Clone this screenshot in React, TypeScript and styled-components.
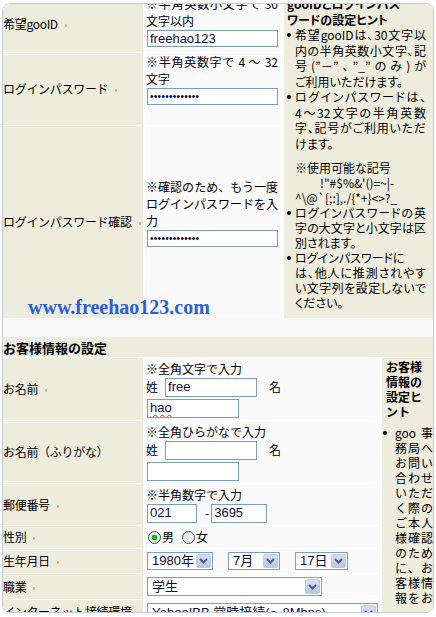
import React from "react";
import styled, { createGlobalStyle } from "styled-components";

const JP = `"Noto Sans CJK JP", "Noto Sans", sans-serif`;
const UI = `"Liberation Sans", "Noto Sans CJK JP", sans-serif`;
const BEIGE = "#edecdd";
const FIELD = "#fafafa";

const Global = createGlobalStyle`
  html, body { margin: 0; padding: 0; background: #ffffff; }
  body { font-family: ${JP}; font-size: 12px; color: #000; }
  ul { margin: 0; padding: 0; list-style: none; }
`;

const Frame = styled.div`
  position: relative;
  box-sizing: border-box;
  width: 432px;
  height: 610px;
  margin: 3px 0 0 2px;
  border: 1px solid #c4cadf;
  border-radius: 8px;
  overflow: hidden;
  background: #f8f8f8;
`;

const Watermark = styled.div`
  position: absolute;
  left: 25px;
  top: 291px;
  font-family: "Liberation Serif", "Times New Roman", serif;
  font-weight: bold;
  font-size: 20px;
  line-height: 24px;
  color: #2c5fd6;
  pointer-events: none;
`;

const TopTable = styled.div`
  display: grid;
  grid-template-columns: 140px 137px 1fr;
  grid-template-rows: 62px 72px 192px;
  column-gap: 2px;
  row-gap: 1px;
  margin-top: -14px;
  background: #fff;
`;

const BottomTable = styled.div`
  display: grid;
  grid-template-columns: 140px 235px 1fr;
  grid-template-rows: 20px 62px 62px 41px 22px 24px 25px 23px;
  column-gap: 2px;
  row-gap: 1px;
  margin-top: 19px;
  background: #fff;
`;

const SectionHead = styled.div`
  grid-column: 1 / -1;
  background: ${BEIGE};
  font-weight: bold;
  font-size: 13px;
  display: flex;
  align-items: center;
`;

const Label = styled.div<{ $pt?: number }>`
  background: ${BEIGE};
  display: flex;
  align-items: center;
  padding-top: ${(p) => p.$pt ?? 0}px;
  line-height: 16px;
  letter-spacing: -0.3px;
  white-space: nowrap;
  overflow: hidden;
`;

const Req = styled.span`
  display: inline-block;
  flex: none;
  width: 2px;
  height: 3px;
  margin: 3px 0 0 7px;
  background: #f3a5a5;
`;

const Field = styled.div<{ $pt?: number; $center?: boolean; $lh?: number }>`
  background: ${FIELD};
  box-sizing: border-box;
  padding: ${(p) => p.$pt ?? 0}px 4px 0 1px;
  display: flex;
  flex-direction: column;
  justify-content: ${(p) => (p.$center ? "center" : "flex-start")};
  line-height: ${(p) => p.$lh ?? 17}px;
  overflow: hidden;
`;

const Line = styled.div<{ $j?: boolean; $indent?: number }>`
  text-align: ${(p) => (p.$j ? "justify" : "left")};
  text-align-last: ${(p) => (p.$j ? "justify" : "auto")};
  padding-left: ${(p) => p.$indent ?? 0}px;
  white-space: ${(p) => (p.$j ? "normal" : "nowrap")};
`;

const InputRow = styled.div<{ $mt?: number; $h?: number }>`
  display: flex;
  align-items: center;
  height: ${(p) => p.$h ?? 19}px;
  margin-top: ${(p) => p.$mt ?? 0}px;
  white-space: nowrap;
`;

const Word = styled.span<{ $ml?: number }>`
  margin-left: ${(p) => p.$ml ?? 0}px;
`;

const TextBox = styled.div<{ $w: number; $h?: number; $ml?: number; $mt?: number }>`
  box-sizing: border-box;
  flex: none;
  width: ${(p) => p.$w}px;
  height: ${(p) => p.$h ?? 19}px;
  margin-left: ${(p) => p.$ml ?? 0}px;
  margin-top: ${(p) => p.$mt ?? 0}px;
  border: 1px solid #7f9db9;
  background: #fff;
  padding: 0 2px;
  display: flex;
  align-items: center;
  font-family: ${UI};
  font-size: 13px;
  color: #0c0c40;
  overflow: hidden;
`;

const Typed = styled.span`
  text-decoration: underline wavy #e02424;
  text-decoration-thickness: 1px;
  text-underline-offset: 2px;
`;

const Dots = styled.span`
  font-family: ${UI};
  font-size: 10px;
  letter-spacing: 0.3px;
  color: #000030;
`;

const Select = styled.div<{ $w: number; $h?: number; $ml?: number }>`
  box-sizing: border-box;
  flex: none;
  width: ${(p) => p.$w}px;
  height: ${(p) => p.$h ?? 18}px;
  margin-left: ${(p) => p.$ml ?? 0}px;
  border: 1px solid #7f9db9;
  background: #fff;
  padding: 0 1px 0 4px;
  display: flex;
  align-items: center;
  justify-content: space-between;
  font-family: ${UI};
  font-size: 13px;
  color: #0c0c30;
  overflow: hidden;
`;

const DropBtn = styled.span`
  box-sizing: border-box;
  flex: none;
  width: 15px;
  height: calc(100% - 2px);
  border-radius: 2px;
  border: 1px solid #bccae6;
  background: linear-gradient(#d6dff2, #b8c6e2);
  display: flex;
  align-items: center;
  justify-content: center;
`;

const Radio = styled.span<{ $on?: boolean; $ml?: number }>`
  box-sizing: border-box;
  flex: none;
  width: 13px;
  height: 13px;
  margin-left: ${(p) => p.$ml ?? 0}px;
  border-radius: 50%;
  border: 1px solid #1c5180;
  background: ${(p) =>
    p.$on
      ? "radial-gradient(circle, #3cc13c 0, #1f9a1f 2.6px, #f4f4ee 3.2px, #e2e2da 100%)"
      : "linear-gradient(135deg, #d8d8d0 0%, #f4f4ef 60%, #ffffff 100%)"};
`;

const TopHint = styled.div`
  grid-column: 3;
  grid-row: 1 / span 3;
  background: ${BEIGE};
  padding: 6px 7px 0 3px;
  line-height: 15.5px;
  font-feature-settings: "palt";
`;

const SideHint = styled.div`
  grid-column: 3;
  grid-row: 2 / span 7;
  background: ${BEIGE};
  padding: 1px 0 0 1px;
  line-height: 15px;
`;

const HintTitle = styled.div<{ $ml?: number }>`
  font-weight: bold;
  white-space: nowrap;
  margin-left: ${(p) => p.$ml ?? 0}px;
`;

const Bullets = styled.ul<{ $indent: number; $mt?: number }>`
  padding-left: ${(p) => p.$indent}px !important;
  margin-top: ${(p) => p.$mt ?? 0}px !important;
`;

const Item = styled.li<{ $dot: number; $lh?: number }>`
  position: relative;
  line-height: ${(p) => (p.$lh ? `${p.$lh}px` : "inherit")};
  &::before {
    content: "";
    position: absolute;
    left: -${(p) => p.$dot}px;
    top: 5.5px;
    width: 4px;
    height: 4px;
    border-radius: 50%;
    background: #000;
  }
`;

const Block = styled.div<{ $mt?: number; $lh?: number }>`
  margin-top: ${(p) => p.$mt ?? 0}px;
  line-height: ${(p) => (p.$lh ? `${p.$lh}px` : "inherit")};
`;

const Chevron = () => (
  <svg width="9" height="6" viewBox="0 0 9 6">
    <path d="M1 1 L4.5 4.5 L8 1" fill="none" stroke="#4a5d88" strokeWidth="2" />
  </svg>
);

const Drop = ({ w, h, ml, children }: { w: number; h?: number; ml?: number; children: React.ReactNode }) => (
  <Select $w={w} $h={h} $ml={ml}>
    <span>{children}</span>
    <DropBtn>
      <Chevron />
    </DropBtn>
  </Select>
);

const Lines = ({ items }: { items: [string, boolean?, number?][] }) => (
  <>
    {items.map(([t, j, ind], i) => (
      <Line key={i} $j={!!j} $indent={ind}>
        {t}
      </Line>
    ))}
  </>
);

export default function App() {
  return (
    <>
      <Global />
      <Frame>
        <TopTable>
          <Label $pt={6}>
            希望gooID<Req />
          </Label>
          <Field $pt={5}>
            <Line $j>※半角英数小文字で 30</Line>
            <Line>文字以内</Line>
            <TextBox $w={131} $h={17} $ml={1} $mt={1}>
              <Typed>freehao123</Typed>
            </TextBox>
          </Field>
          <TopHint>
            <HintTitle>
              gooIDとログインパス
              <br />
              ワードの設定ヒント
            </HintTitle>
            <Bullets $indent={8}>
              <Item $dot={8}>
                <Lines
                  items={[
                    ["希望gooIDは、30文字以", true],
                    ["内の半角英数小文字、記", true],
                    ["号(”－”、”_”のみ)が", true],
                    ["ご利用いただけます。"],
                  ]}
                />
              </Item>
              <Item $dot={8}>
                <Lines
                  items={[
                    ["ログインパスワードは、", true],
                    ["4～32文字の半角英数", true],
                    ["字、記号がご利用いただ", true],
                    ["けます。"],
                  ]}
                />
                <Block $mt={9} $lh={15}>
                  <Lines
                    items={[
                      ["※使用可能な記号"],
                      [`!"#$%&'()=~|-`, false, 25],
                      ["^\\@`[;:],./{*+}<>?_"],
                    ]}
                  />
                </Block>
              </Item>
              <Item $dot={8} $lh={15}>
                <Lines
                  items={[
                    ["ログインパスワードの英", true],
                    ["字の大文字と小文字は区", true],
                    ["別されます。"],
                  ]}
                />
              </Item>
              <Item $dot={8} $lh={15}>
                <Lines
                  items={[
                    ["ログインパスワードに"],
                    ["は、他人に推測されやす", true],
                    ["い文字列を設定しないで", true],
                    ["ください。"],
                  ]}
                />
              </Item>
            </Bullets>
          </TopHint>

          <Label>
            ログインパスワード<Req />
          </Label>
          <Field>
            <Line $j>※半角英数字で 4 ～ 32</Line>
            <Line>文字</Line>
            <TextBox $w={131} $h={17} $ml={1} $mt={1}>
              <Dots>•••••••••••••</Dots>
            </TextBox>
          </Field>

          <Label>
            ログインパスワード確認<Req />
          </Label>
          <Field $pt={52}>
            <Line $j>※確認のため、もう一度</Line>
            <Line $j>ログインパスワードを入</Line>
            <Line>力</Line>
            <TextBox $w={131} $h={17} $ml={1} $mt={1}>
              <Dots>•••••••••••••</Dots>
            </TextBox>
          </Field>
        </TopTable>

        <BottomTable>
          <SectionHead>お客様情報の設定</SectionHead>

          <Label>
            お名前<Req />
          </Label>
          <Field $center $lh={16}>
            <Line>※全角文字で入力</Line>
            <InputRow $mt={1}>
              <Word>姓</Word>
              <TextBox $w={92} $ml={7}>free</TextBox>
              <Word $ml={12}>名</Word>
            </InputRow>
            <InputRow $mt={2}>
              <TextBox $w={92} $ml={1}>
                <Typed>hao</Typed>
              </TextBox>
            </InputRow>
          </Field>
          <SideHint>
            <HintTitle $ml={3}>
              お客様
              <br />
              情報の
              <br />
              設定ヒ
              <br />
              ント
            </HintTitle>
            <Bullets $indent={12} $mt={6}>
              <Item $dot={12}>
                <Lines
                  items={[
                    ["goo 事", true],
                    ["務局へ", true],
                    ["お問い", true],
                    ["合わせ", true],
                    ["いただ", true],
                    ["く際の", true],
                    ["ご本人", true],
                    ["様確認", true],
                    ["のため", true],
                    ["に、お", true],
                    ["客様情", true],
                    ["報をお", true],
                  ]}
                />
              </Item>
            </Bullets>
          </SideHint>

          <Label>お名前（ふりがな）</Label>
          <Field $center $lh={16}>
            <Line>※全角ひらがなで入力</Line>
            <InputRow $mt={1}>
              <Word>姓</Word>
              <TextBox $w={92} $ml={7} />
              <Word $ml={12}>名</Word>
            </InputRow>
            <InputRow $mt={2}>
              <TextBox $w={92} $ml={1} />
            </InputRow>
          </Field>

          <Label>
            郵便番号<Req />
          </Label>
          <Field $center $lh={16}>
            <Line>※半角数字で入力</Line>
            <InputRow $mt={1}>
              <TextBox $w={50} $ml={1}>021</TextBox>
              <Word $ml={8}>-</Word>
              <TextBox $w={56} $ml={2}>3695</TextBox>
            </InputRow>
          </Field>

          <Label>
            性別<Req />
          </Label>
          <Field $center $lh={16}>
            <InputRow $h={16}>
              <Radio $on $ml={2} />
              <Word $ml={1}>男</Word>
              <Radio $ml={8} />
              <Word $ml={1}>女</Word>
            </InputRow>
          </Field>

          <Label>
            生年月日<Req />
          </Label>
          <Field $center $lh={16}>
            <InputRow $h={18}>
              <Drop w={66} ml={1}>1980年</Drop>
              <Drop w={52} ml={15}>7月</Drop>
              <Drop w={53} ml={15}>17日</Drop>
            </InputRow>
          </Field>

          <Label>
            職業<Req />
          </Label>
          <Field $center $lh={16}>
            <InputRow>
              <Drop w={175} h={19} ml={1}>学生</Drop>
            </InputRow>
          </Field>

          <Label>インターネット接続環境</Label>
          <Field $pt={3} $lh={16}>
            <InputRow>
              <Drop w={231} h={19} ml={1}>Yahoo!BB 常時接続(～8Mbps)</Drop>
            </InputRow>
          </Field>
        </BottomTable>

        <Watermark>www.freehao123.com</Watermark>
      </Frame>
    </>
  );
}
